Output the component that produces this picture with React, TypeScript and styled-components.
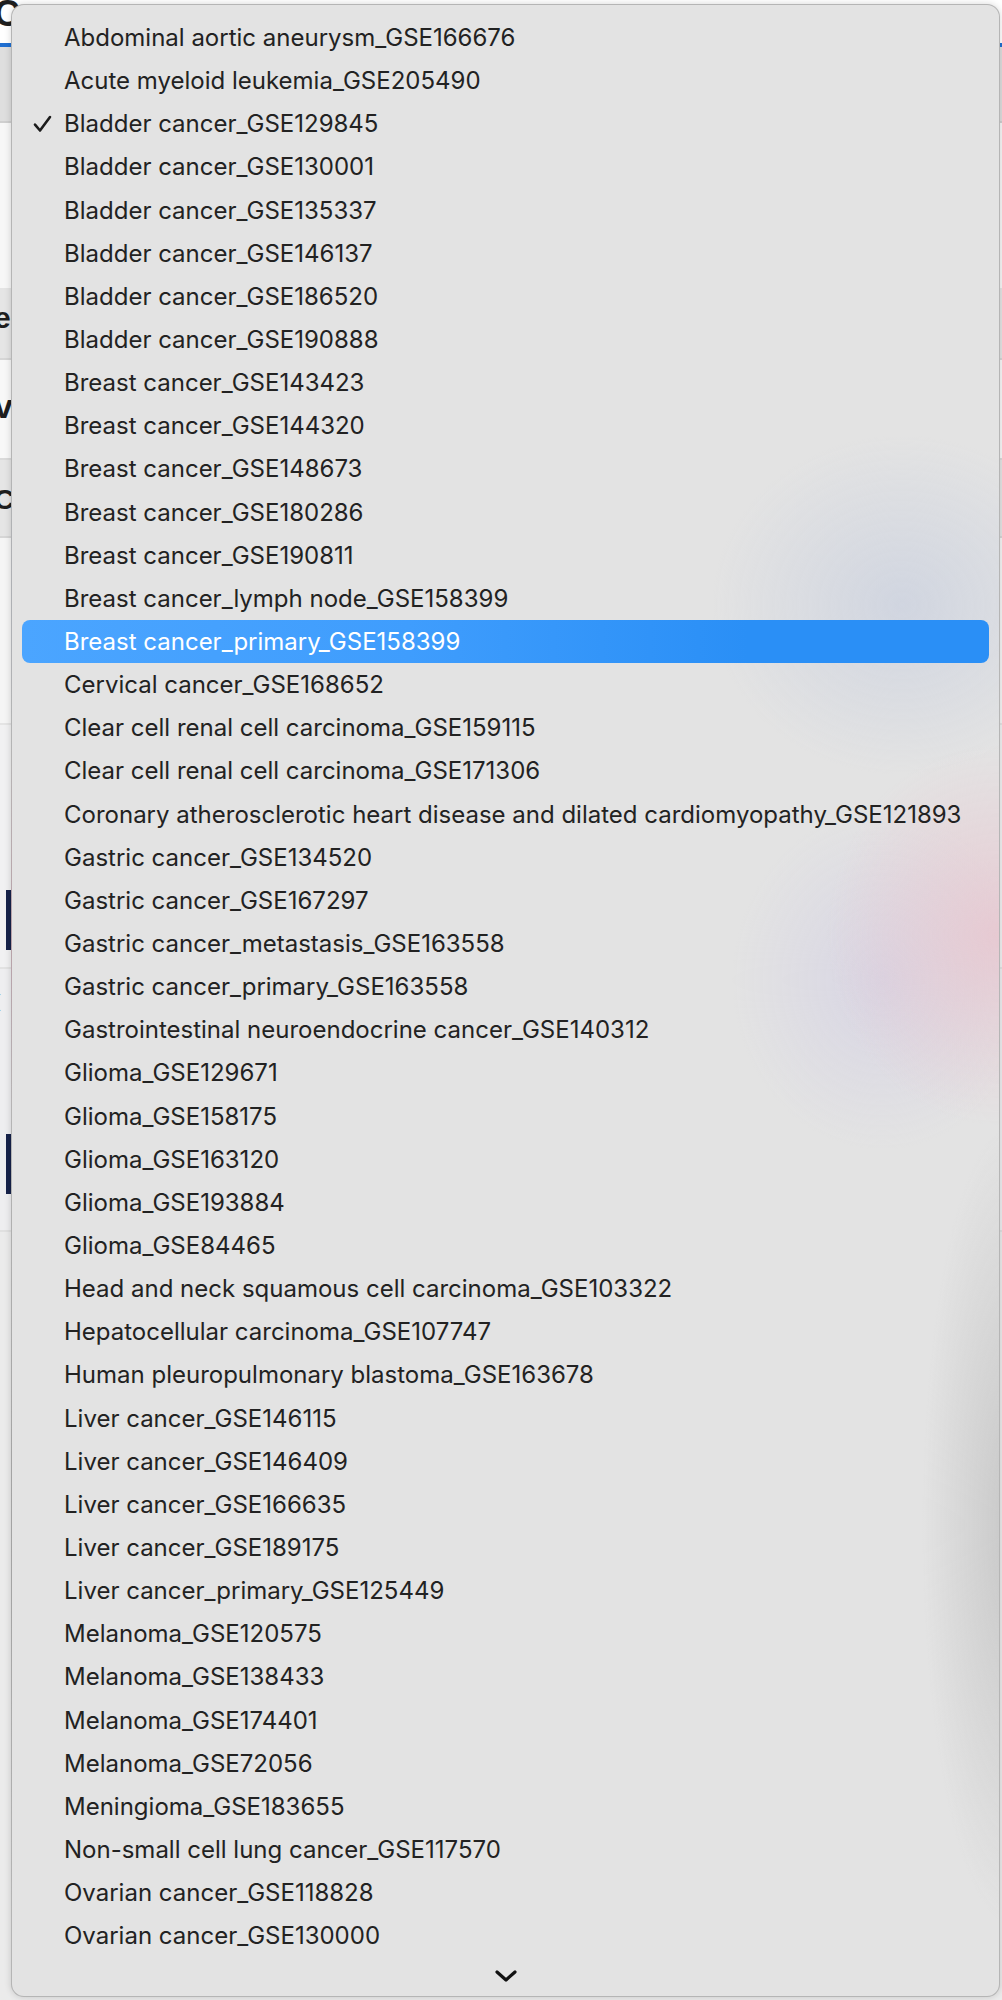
import React from "react";
import styled, { createGlobalStyle } from "styled-components";

const GlobalStyle = createGlobalStyle`
  html, body {
    margin: 0;
    padding: 0;
    background: #ffffff;
  }
  body {
    font-family: Inter, "Liberation Sans", "Noto Sans", sans-serif;
    -webkit-font-smoothing: antialiased;
  }
`;

const datasets: string[] = [
  "Abdominal aortic aneurysm_GSE166676",
  "Acute myeloid leukemia_GSE205490",
  "Bladder cancer_GSE129845",
  "Bladder cancer_GSE130001",
  "Bladder cancer_GSE135337",
  "Bladder cancer_GSE146137",
  "Bladder cancer_GSE186520",
  "Bladder cancer_GSE190888",
  "Breast cancer_GSE143423",
  "Breast cancer_GSE144320",
  "Breast cancer_GSE148673",
  "Breast cancer_GSE180286",
  "Breast cancer_GSE190811",
  "Breast cancer_lymph node_GSE158399",
  "Breast cancer_primary_GSE158399",
  "Cervical cancer_GSE168652",
  "Clear cell renal cell carcinoma_GSE159115",
  "Clear cell renal cell carcinoma_GSE171306",
  "Coronary atherosclerotic heart disease and dilated cardiomyopathy_GSE121893",
  "Gastric cancer_GSE134520",
  "Gastric cancer_GSE167297",
  "Gastric cancer_metastasis_GSE163558",
  "Gastric cancer_primary_GSE163558",
  "Gastrointestinal neuroendocrine cancer_GSE140312",
  "Glioma_GSE129671",
  "Glioma_GSE158175",
  "Glioma_GSE163120",
  "Glioma_GSE193884",
  "Glioma_GSE84465",
  "Head and neck squamous cell carcinoma_GSE103322",
  "Hepatocellular carcinoma_GSE107747",
  "Human pleuropulmonary blastoma_GSE163678",
  "Liver cancer_GSE146115",
  "Liver cancer_GSE146409",
  "Liver cancer_GSE166635",
  "Liver cancer_GSE189175",
  "Liver cancer_primary_GSE125449",
  "Melanoma_GSE120575",
  "Melanoma_GSE138433",
  "Melanoma_GSE174401",
  "Melanoma_GSE72056",
  "Meningioma_GSE183655",
  "Non-small cell lung cancer_GSE117570",
  "Ovarian cancer_GSE118828",
  "Ovarian cancer_GSE130000",
];

const checked = "Bladder cancer_GSE129845";
const highlighted = "Breast cancer_primary_GSE158399";

// bits of the page behind the popup, only a sliver of it shows on the left
type BandProps = { h: number; tone?: string; line?: string };

type BandSpec = {
  h: number;
  tone?: string;
  line?: string;
  glyph?: string;
  glyphSize?: number;
  glyphTop?: number;
  bar?: boolean;
};

const bands: BandSpec[] = [
  { h: 43, glyph: "C", glyphSize: 36, glyphTop: -4 },
  { h: 4, tone: "#1f6fd1" },
  { h: 76, tone: "#dedede", line: "#cfcfcf" },
  { h: 167, tone: "#f7f7f7", line: "#e4e4e4" },
  { h: 70, tone: "#e5e5e5", glyph: "e", glyphSize: 30, glyphTop: 13, line: "#d6d6d6" },
  { h: 100, tone: "#f8f8f8", glyph: "v", glyphSize: 34, glyphTop: 29, line: "#dadada" },
  { h: 78, tone: "#e5e5e5", glyph: "C", glyphSize: 28, glyphTop: 26, line: "#d6d6d6" },
  { h: 187, tone: "#f5f5f5", glyph: "l", glyphSize: 22, glyphTop: 43, line: "#e4e4e4" },
  { h: 244, tone: "#f1f1f2", glyph: "l", glyphSize: 23, glyphTop: 21, bar: true, line: "#e2e2e2" },
  { h: 263, tone: "#eeeef0", glyph: "(", glyphSize: 19, glyphTop: 22, bar: true, line: "#e0e0e0" },
  { h: 768, tone: "#ebebeb" },
];

const App: React.FC = (): JSX.Element => {
  return (
    <Page>
      <GlobalStyle />
      <Backdrop>
        {bands.map((b, i) => (
          <Band key={i} h={b.h} tone={b.tone} line={b.line}>
            {b.glyph && (
              <Glyph size={b.glyphSize ?? 24} top={b.glyphTop ?? 0}>
                {b.glyph}
              </Glyph>
            )}
            {b.bar && <NavyBar />}
          </Band>
        ))}
      </Backdrop>

      <Menu role="listbox">
        <MenuList>
          {datasets.map((name) => (
            <MenuItem key={name} isActive={name === highlighted}>
              <CheckSlot>
                {name === checked && (
                  <svg width="19" height="18" viewBox="0 0 19 18">
                    <path
                      d="M2 9.6 L7 15.5 L17 2"
                      fill="none"
                      stroke="#1c1c1c"
                      strokeWidth="2.6"
                      strokeLinecap="round"
                      strokeLinejoin="round"
                    />
                  </svg>
                )}
              </CheckSlot>
              <ItemLabel>{name}</ItemLabel>
            </MenuItem>
          ))}
        </MenuList>
        <ScrollHint>
          <svg width="22" height="12" viewBox="0 0 22 12">
            <path
              d="M2 2 L11 10 L20 2"
              fill="none"
              stroke="#111"
              strokeWidth="3.2"
              strokeLinecap="round"
              strokeLinejoin="round"
            />
          </svg>
        </ScrollHint>
      </Menu>
    </Page>
  );
};

const Page = styled.div`
  position: relative;
  width: 1002px;
  height: 2000px;
  overflow: hidden;
  background: #ffffff;
`;

const Backdrop = styled.div`
  display: flex;
  flex-direction: column;
  width: 100%;
`;

const Band = styled.div<BandProps>`
  position: relative;
  flex: none;
  height: ${({ h }) => h}px;
  background: ${({ tone }) => tone ?? "#ffffff"};
  border-bottom: ${({ line }) => (line ? `2px solid ${line}` : "none")};
  box-sizing: border-box;
  overflow: hidden;
`;

const Glyph = styled.div<{ size: number; top: number }>`
  margin-top: ${({ top }) => top}px;
  margin-left: -6px;
  font-family: "Liberation Sans", Arial, sans-serif;
  font-weight: 700;
  font-size: ${({ size }) => size}px;
  line-height: 1;
  color: #1e1e1e;
`;

const NavyBar = styled.div`
  position: absolute;
  left: 6px;
  top: 165px;
  width: 40px;
  height: 60px;
  background: #16224a;
`;

const Menu = styled.div`
  position: absolute;
  top: 4px;
  left: 11px;
  width: 989px;
  height: 1993px;
  box-sizing: border-box;
  display: flex;
  flex-direction: column;
  border-radius: 13px;
  border: 1px solid rgba(0, 0, 0, 0.2);
  box-shadow: 0 0 7px rgba(0, 0, 0, 0.16);
  background:
    radial-gradient(ellipse 190px 170px at 890px 600px, rgba(196, 204, 222, 0.6), rgba(196, 204, 222, 0) 100%),
    radial-gradient(ellipse 170px 190px at 985px 930px, rgba(232, 196, 206, 0.8), rgba(232, 196, 206, 0) 100%),
    radial-gradient(ellipse 150px 170px at 870px 975px, rgba(208, 204, 228, 0.6), rgba(208, 204, 228, 0) 100%),
    radial-gradient(ellipse 90px 400px at 1000px 1520px, rgba(188, 188, 188, 0.7), rgba(188, 188, 188, 0) 100%),
    #e3e3e3;
  overflow: hidden;
`;

const MenuList = styled.div`
  display: flex;
  flex-direction: column;
  padding: 11px 10px 0;
`;

const MenuItem = styled.div<{ isActive?: boolean }>`
  display: grid;
  grid-template-columns: 42px 1fr;
  align-items: center;
  height: 43.15px;
  border-radius: 8px;
  color: ${({ isActive }) => (isActive ? "#ffffff" : "#222222")};
  background: ${({ isActive }) =>
    isActive ? "linear-gradient(90deg, #4ba5ff 0%, #3f9dfd 40%, #2a8ff6 75%, #2a8ff6 100%)" : "transparent"};
`;

const CheckSlot = styled.div`
  display: flex;
  align-items: center;
  padding-left: 11px;
  height: 100%;
`;

const ItemLabel = styled.span`
  font-size: 24px;
  white-space: nowrap;
`;

const ScrollHint = styled.div`
  flex: 1;
  display: flex;
  align-items: center;
  justify-content: center;
  padding-bottom: 2px;
`;

export default App;
